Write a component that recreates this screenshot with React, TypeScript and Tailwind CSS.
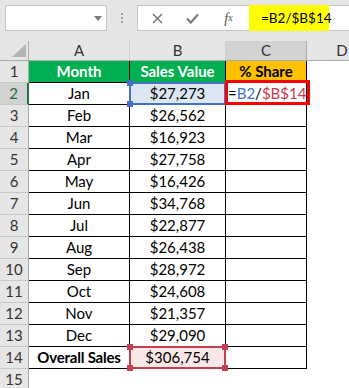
import React from "react";

const rows: [string, string][] = [
  ["Jan", "$27,273"],
  ["Feb", "$26,562"],
  ["Mar", "$16,923"],
  ["Apr", "$27,758"],
  ["May", "$16,426"],
  ["Jun", "$34,768"],
  ["Jul", "$22,877"],
  ["Aug", "$26,438"],
  ["Sep", "$28,972"],
  ["Oct", "$24,608"],
  ["Nov", "$21,357"],
  ["Dec", "$29,090"],
];

function RowHead({ n, active }: { n: number; active?: boolean }) {
  return (
    <div
      className={
        "w-[29px] shrink-0 h-full flex items-center justify-center border-b border-[#c8c8c8] text-[15px] " +
        (active
          ? "bg-[#d2d2d2] text-[#1e6b3d] border-r-2 border-r-[#217346]"
          : "bg-[#e6e6e6] text-[#333] border-r border-r-[#ababab]")
      }
    >
      {n}
    </div>
  );
}

function Handle({ pos, color }: { pos: string; color: string }) {
  return <div className={"absolute w-[6px] h-[6px] " + pos + " " + color} />;
}

export default function App() {
  return (
    <div
      className="w-[349px] h-[388px] overflow-hidden bg-[#e6e6e6] text-black"
      style={{ fontFamily: "Lato, 'Open Sans', sans-serif" }}
    >
      {/* Formula bar */}
      <div className="h-[41px] flex items-start pt-[5px] pl-[5px]">
        <div className="w-[102px] h-[26px] bg-white border border-[#c6c6c6] relative">
          <div className="absolute left-[88px] top-[10px] w-0 h-0 border-l-[4px] border-r-[4px] border-t-[5px] border-l-transparent border-r-transparent border-t-[#7a7a7a]" />
        </div>
        <div className="w-[30px] h-[26px] flex flex-col items-center justify-center gap-[2px]">
          <div className="w-[2px] h-[2px] bg-[#a0a0a0]" />
          <div className="w-[2px] h-[2px] bg-[#a0a0a0]" />
          <div className="w-[2px] h-[2px] bg-[#a0a0a0]" />
        </div>
        <div className="flex-1 h-[26px] bg-white border border-[#c6c6c6] border-r-0 flex items-center">
          <div className="w-[38px] flex justify-center">
            <svg width="11" height="11" viewBox="0 0 11 11">
              <path d="M1 1 L10 10 M10 1 L1 10" stroke="#6d6d6d" strokeWidth="1.4" />
            </svg>
          </div>
          <div className="w-[32px] flex justify-center">
            <svg width="13" height="11" viewBox="0 0 13 11">
              <path d="M1 5.5 L4.8 9.5 L12 1.5" stroke="#7a7a7a" strokeWidth="2.2" fill="none" />
            </svg>
          </div>
          <div
            className="w-[41px] flex justify-center text-[14px] italic text-[#555]"
            style={{ fontFamily: "'Liberation Serif', serif" }}
          >
            f<span className="text-[10px] translate-y-[2px]">x</span>
          </div>
          <div className="w-[80px] h-[26px] bg-[#ffff00] flex items-center pl-[12px] text-[13.5px]">
            =B2/$B$14
          </div>
        </div>
      </div>

      {/* Column headers */}
      <div className="h-[20px] flex border-b border-[#ababab]">
        <div className="w-[29px] shrink-0 relative bg-[#e6e6e6] border-r border-[#ababab]">
          <div
            className="absolute right-[2px] bottom-[3px] w-0 h-0"
            style={{ borderLeft: "14px solid transparent", borderBottom: "13px solid #b4b4b4" }}
          />
        </div>
        <div className="w-[101px] shrink-0 flex items-center justify-center text-[15px] text-[#333] border-r border-[#d0d0d0]">A</div>
        <div className="w-[96px] shrink-0 flex items-center justify-center text-[15px] text-[#333] border-r border-[#d0d0d0]">B</div>
        <div className="w-[81px] shrink-0 flex items-center justify-center text-[15px] text-[#333] bg-[#d2d2d2] border-r border-[#ababab]">C</div>
        <div className="w-[70px] shrink-0 flex items-center justify-center text-[15px] text-[#333]">D</div>
      </div>

      {/* Row 1 */}
      <div className="h-[22px] flex bg-white">
        <RowHead n={1} />
        <div className="w-[101px] shrink-0 bg-[#00b050] border-r border-b border-black flex items-center justify-center text-white font-bold text-[15px]">Month</div>
        <div className="w-[96px] shrink-0 bg-[#00b050] border-r border-b border-black flex items-center justify-center text-white font-bold text-[15px]">Sales Value</div>
        <div className="w-[81px] shrink-0 bg-[#ffc000] border-r border-b border-black flex items-center justify-center font-bold text-[15px]">% Share</div>
      </div>

      {rows.map(([m, v], i) => (
        <div key={m} className="h-[22px] flex bg-white">
          <RowHead n={i + 2} active={i === 0} />
          <div className="w-[101px] shrink-0 border-r border-b border-black flex items-center justify-center text-[15px]">{m}</div>
          <div
            className={
              "w-[96px] shrink-0 border-r border-b border-black flex items-center justify-center text-[15px] relative " +
              (i === 0 ? "bg-[#dde7f4]" : "")
            }
          >
            {v}
            {i === 0 && (
              <>
                <div className="absolute -left-px -top-px -right-px -bottom-px border-2 border-[#4472c4]" />
                <Handle pos="-left-[3px] -top-[3px]" color="bg-[#4472c4]" />
                <Handle pos="-left-[3px] -bottom-[3px]" color="bg-[#4472c4]" />
              </>
            )}
          </div>
          <div className="w-[81px] shrink-0 border-r border-b border-black flex items-center text-[15px] relative">
            {i === 0 && (
              <>
                <span className="pl-[2px]">
                  =<span className="text-[#4472c4]">B2</span>/<span className="text-[#c8384f]">$B$14</span>
                </span>
                <div className="absolute -left-px -top-[3px] -right-[4px] -bottom-[1px] border-[3px] border-[#ff0000]" />
              </>
            )}
          </div>
        </div>
      ))}

      {/* Row 14 */}
      <div className="h-[22px] flex bg-white">
        <RowHead n={14} />
        <div className="w-[101px] shrink-0 border-r border-b border-black flex items-center justify-center font-bold text-[15px] tracking-[-0.2px]">Overall Sales</div>
        <div className="w-[96px] shrink-0 border-r border-b border-black flex items-center justify-center text-[15px] relative bg-[#f9e6e7]">
          $306,754
          <div className="absolute -left-px -top-px -right-px -bottom-px border-2 border-[#c2404f]" />
          <Handle pos="-left-[3px] -top-[3px]" color="bg-[#c2404f]" />
          <Handle pos="-right-[3px] -top-[3px]" color="bg-[#c2404f]" />
          <Handle pos="-left-[3px] -bottom-[3px]" color="bg-[#c2404f]" />
          <Handle pos="-right-[3px] -bottom-[3px]" color="bg-[#c2404f]" />
        </div>
        <div className="w-[81px] shrink-0 border-r border-b border-black" />
      </div>

      {/* Row 15 */}
      <div className="h-[22px] flex bg-white">
        <RowHead n={15} />
        <div className="flex-1" />
      </div>
    </div>
  );
}
